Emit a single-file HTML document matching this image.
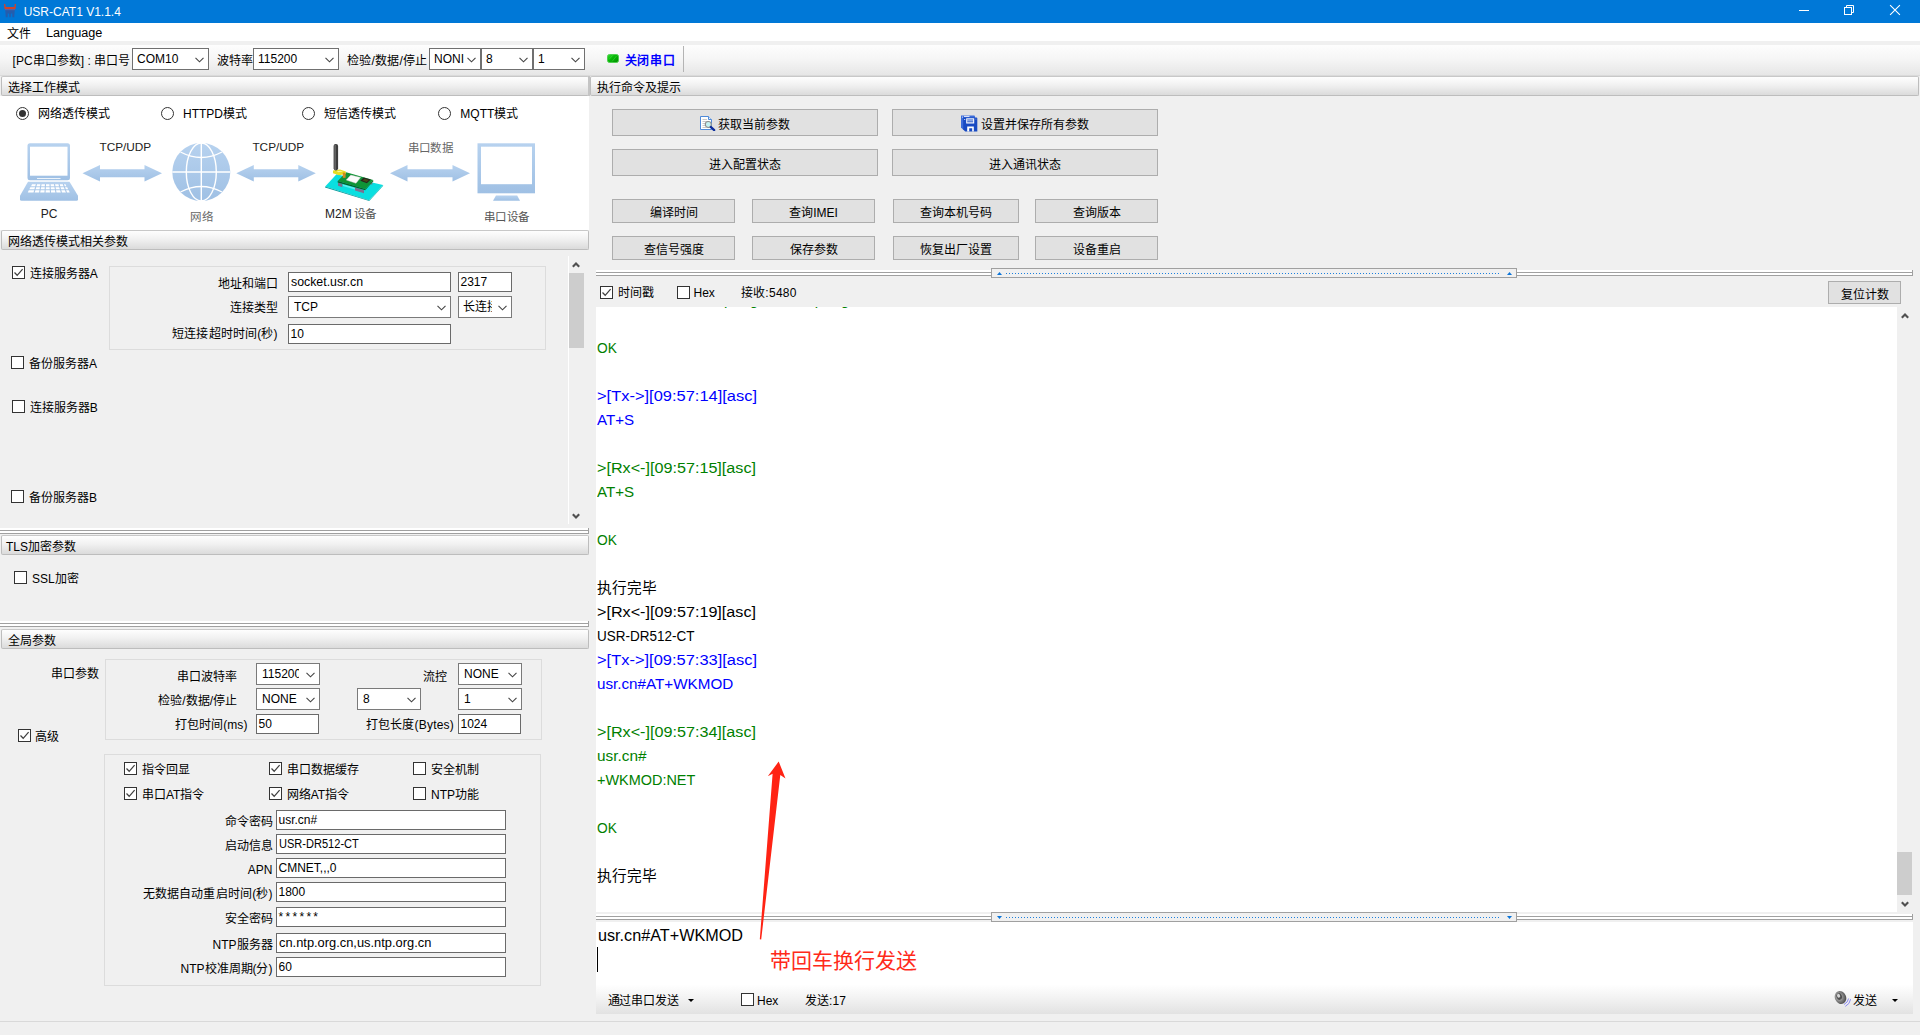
<!DOCTYPE html>
<html lang="zh-CN">
<head>
<meta charset="utf-8">
<title>USR-CAT1 V1.1.4</title>
<style>
html,body{margin:0;padding:0;}
body{width:1920px;height:1035px;overflow:hidden;position:relative;background:#f0f0f0;font-family:"Liberation Sans",sans-serif;font-size:12px;color:#000;}
body *{box-sizing:content-box;}
div,svg{position:absolute;}
.t{white-space:pre;}
.titlebar{left:0;top:0;width:1920px;height:23px;background:#0078d7;}
.menubar{left:0;top:23px;width:1920px;height:18px;background:#fff;}
.toolbar{left:0;top:45px;width:1920px;height:30px;background:linear-gradient(#fdfdfd 0%,#f6f6f6 45%,#e6e6e6 100%);border-bottom:1px solid #dadada;}
.hdr{border:1px solid #bdbdbd;border-top-color:#c8c8c8;border-radius:2px;background:linear-gradient(#fefefe 0%,#f1f1f1 45%,#dbdbdb 100%);padding-left:6px;white-space:pre;overflow:hidden;}
.white{background:#fff;}
.cb{width:11px;height:11px;border:1px solid #333;background:#fff;}
.cb svg{left:-1px;top:-1px;}
.rb{width:11px;height:11px;border:1px solid #333;border-radius:50%;background:#fff;}
.rb.on::after{content:"";position:absolute;left:2px;top:2px;width:7px;height:7px;border-radius:50%;background:#333;}
.inp{border:1px solid #6a6a6a;background:#fff;white-space:pre;overflow:hidden;}
.cmb{border:1px solid #7a7a7a;background:#fff;white-space:pre;overflow:hidden;}
.cmb.tb{border-color:#707070;}
.ct{overflow:hidden;white-space:pre;}
.chev{right:4px;top:50%;margin-top:-2.5px;}
.btn{border:1px solid #adadad;background:#e1e1e1;text-align:center;white-space:pre;overflow:hidden;}
.grp{border:1px solid #dcdcdc;}
.log{left:596px;top:307px;width:1301px;height:605px;background:#fff;overflow:hidden;}
.ll{left:0.8px;transform-origin:0 50%;height:24px;line-height:24px;font-size:15.5px;white-space:pre;}
.g{color:#008000;}
.b{color:#0000ff;}

</style>
</head>
<body>
<div class="titlebar"></div>
<svg style="left:0;top:0" width="20" height="23" viewBox="0 0 20 23">
<path d="M4 4.1 H5.3 L5.7 6.9 H14.3 L14.7 4.1 H16 L15.5 8.9 H4.5 Z" fill="#d2432a"/>
<path d="M5.2 9.6 H14.8 L14.2 17.2 H12.4 L12.2 13.4 H10.9 L10.7 17.2 H9.3 L9.1 13.4 H7.8 L7.6 17.2 H5.8 Z" fill="#2c58a6" opacity="0.85"/>
<rect x="5" y="8.9" width="10" height="1.3" fill="#6a5f9a" opacity="0.8"/>
</svg>
<div class="t" style="left:23.7px;top:4.2px;line-height:16px;height:16px;color:#fff;">USR-CAT1 V1.1.4</div>
<svg style="left:1799px;top:10px" width="10" height="1" viewBox="0 0 10 1"><rect width="10" height="1" fill="#fff"/></svg>
<svg style="left:1844px;top:5px" width="11" height="11" viewBox="0 0 11 11"><path d="M2.5 2.5 V0.5 H9.5 V7.5 H7.5" fill="none" stroke="#fff" stroke-width="1"/><rect x="0.5" y="2.5" width="7" height="7" fill="none" stroke="#fff" stroke-width="1"/></svg>
<svg style="left:1889px;top:4px" width="12" height="12" viewBox="0 0 12 12"><path d="M1.1 1.1 L10.9 10.9 M10.9 1.1 L1.1 10.9" fill="none" stroke="#fff" stroke-width="1.1"/></svg>
<div class="menubar"></div>
<div class="t" style="left:7px;top:25.7px;line-height:16px;height:16px;">文件</div>
<div class="t" style="left:45.6px;top:24.6px;line-height:16px;height:16px;transform:scaleX(1.0564);transform-origin:0 50%;">Language</div>
<div class="toolbar"></div>
<div class="t" style="left:12.5px;top:53.2px;line-height:16px;height:16px;letter-spacing:0.05px;">[PC串口参数] : 串口号</div>
<div class="cmb tb" style="left:132px;top:48px;width:75px;height:20px"><div class="ct" style="left:4px;top:0;width:54px;height:20px;line-height:21px">COM10</div><svg class="chev" width="9" height="6" viewBox="0 0 9 6"><path d="M0.5 0.8 L4.5 4.8 L8.5 0.8" fill="none" stroke="#444" stroke-width="1.1"/></svg></div>
<div class="t" style="left:217px;top:53.2px;line-height:16px;height:16px;">波特率</div>
<div class="cmb tb" style="left:253px;top:48px;width:84px;height:20px"><div class="ct" style="left:4px;top:0;width:63px;height:20px;line-height:21px">115200</div><svg class="chev" width="9" height="6" viewBox="0 0 9 6"><path d="M0.5 0.8 L4.5 4.8 L8.5 0.8" fill="none" stroke="#444" stroke-width="1.1"/></svg></div>
<div class="t" style="left:347px;top:53.2px;line-height:16px;height:16px;letter-spacing:0.23px;">检验/数据/停止</div>
<div class="cmb tb" style="left:429px;top:48px;width:50px;height:20px"><div class="ct" style="left:4px;top:0;width:30px;height:20px;line-height:21px">NONI</div><svg class="chev" width="9" height="6" viewBox="0 0 9 6"><path d="M0.5 0.8 L4.5 4.8 L8.5 0.8" fill="none" stroke="#444" stroke-width="1.1"/></svg></div>
<div class="cmb tb" style="left:481px;top:48px;width:50px;height:20px"><div class="ct" style="left:4px;top:0;width:29px;height:20px;line-height:21px">8</div><svg class="chev" width="9" height="6" viewBox="0 0 9 6"><path d="M0.5 0.8 L4.5 4.8 L8.5 0.8" fill="none" stroke="#444" stroke-width="1.1"/></svg></div>
<div class="cmb tb" style="left:533px;top:48px;width:50px;height:20px"><div class="ct" style="left:4px;top:0;width:29px;height:20px;line-height:21px">1</div><svg class="chev" width="9" height="6" viewBox="0 0 9 6"><path d="M0.5 0.8 L4.5 4.8 L8.5 0.8" fill="none" stroke="#444" stroke-width="1.1"/></svg></div>
<svg style="left:607px;top:54px" width="12" height="9" viewBox="0 0 12 9">
<defs><linearGradient id="led" x1="0" y1="0" x2="1" y2="1"><stop offset="0" stop-color="#35e035"/><stop offset="0.4" stop-color="#08ba08"/><stop offset="1" stop-color="#008c00"/></linearGradient></defs>
<rect x="0.5" y="0.5" width="11" height="8" rx="2" fill="url(#led)" stroke="#4fcf4f" stroke-width="1"/>
<path d="M2 5.5 L5.5 1.5 M5 7.5 L9.5 2" stroke="#5ff05f" stroke-width="0.6" opacity="0.6"/></svg>
<div class="t" style="left:624.5px;top:53.2px;line-height:16px;height:16px;color:#0000ff;font-weight:700;letter-spacing:0.75px;">关闭串口</div>
<div class="" style="left:683px;top:46px;width:1px;height:26px;background:#b4b4b4;"></div>
<div class="hdr" style="left:1px;top:76px;padding-left:6px;width:580px;height:18px;line-height:22px">选择工作模式</div>
<div class="white" style="left:0px;top:96px;width:589px;height:134px;"></div>
<div class="rb on" style="left:16px;top:107.2px"></div>
<div class="t" style="left:37.5px;top:106.4px;line-height:16px;height:16px;">网络透传模式</div>
<div class="rb" style="left:161px;top:107.2px"></div>
<div class="t" style="left:183px;top:106.4px;line-height:16px;height:16px;">HTTPD模式</div>
<div class="rb" style="left:301.8px;top:107.2px"></div>
<div class="t" style="left:323.7px;top:106.4px;line-height:16px;height:16px;">短信透传模式</div>
<div class="rb" style="left:438px;top:107.2px"></div>
<div class="t" style="left:460.3px;top:106.4px;line-height:16px;height:16px;">MQTT模式</div>
<svg style="left:0;top:135px" width="589" height="95" viewBox="0 135 589 95">
<defs><linearGradient id="bl" x1="0" y1="0" x2="0" y2="1"><stop offset="0" stop-color="#b7d2ef"/><stop offset="1" stop-color="#9fc0e4"/></linearGradient></defs>
<!-- laptop -->
<rect x="27.5" y="143.3" width="42.5" height="37" rx="2.5" fill="url(#bl)"/>
<rect x="30" y="146.7" width="37.5" height="29" fill="#fff"/>
<path d="M28 181.7 H69.5 L78 195.8 V199.3 Q78 200.8 76.5 200.8 H21.5 Q20 200.8 20 199.3 V195.8 Z" fill="url(#bl)"/>
<g fill="#fff">
<path d="M32 184.2 h33.5 l0.9 2 h-35.3z"/>
<path d="M30.3 187.2 h36.9 l0.9 2 h-38.7z"/>
<path d="M28.8 190.3 h39.9 l1 2.2 h-41.9z"/>
</g>
<g stroke="#a9c7e8" stroke-width="1.1">
<path d="M36.5 184 L34 193 M41 184 L39.6 193 M45.5 184 L45 193 M50 184 L50.5 193 M54.5 184 L56 193 M59 184 L61.5 193 M63.3 184 L66.6 193"/>
</g>
<rect x="37" y="178" width="23.5" height="1" fill="#fff" opacity=".8"/>
<!-- arrows -->
<path id="ar" d="M82.5 173.3 L100 165 V169.3 H144.5 V165 L162 173.3 L144.5 181.6 V177.3 H100 V181.6 Z" fill="url(#bl)"/>
<path d="M236.3 173.3 L253.8 165 V169.3 H298.3 V165 L315.8 173.3 L298.3 181.6 V177.3 H253.8 V181.6 Z" fill="url(#bl)"/>
<path d="M390 173.3 L407.5 165 V169.3 H452.5 V165 L470 173.3 L452.5 181.6 V177.3 H407.5 V181.6 Z" fill="url(#bl)"/>
<!-- globe -->
<circle cx="201.3" cy="172" r="29" fill="url(#bl)"/>
<g fill="none" stroke="#fff" stroke-width="1.4">
<path d="M201.3 143 V201 M172.3 172 H230.3"/>
<ellipse cx="201.3" cy="172" rx="15" ry="29"/>
<path d="M180.5 152 Q201.3 163 222 152 M180.5 192 Q201.3 181 222 192"/>
</g>
<!-- monitor -->
<rect x="477.5" y="143.3" width="57.5" height="50" fill="url(#bl)"/>
<rect x="481" y="146.7" width="51" height="37.5" fill="#fff"/>
<path d="M496 195.4 H517.2 L520 200.7 H493 Z" fill="url(#bl)"/>
<!-- M2M device -->
<path d="M325.2 186.6 L336.5 174.3 L383 185 L369 200.2 Z" fill="#0adfe0"/>
<path d="M325.2 186.6 L369 200.2 L369.3 201 L325 187.6 Z" fill="#089c9e"/>
<path d="M369 200.2 L383 185 L383.2 185.8 L369.3 201 Z" fill="#0bbfc0"/>
<path d="M338 182.5 L342.3 184 V187.3 L338 185.8 Z M355 187.5 L364 190.3 V193.3 L355 190.5 Z M370.5 181.5 L372.3 182 V184.6 L370.5 184.3 Z" fill="#7c7090"/>
<path d="M343 184.3 L355 187.8 V189.6 L343 186 Z" fill="#5af0f0"/>
<path d="M337.7 181 L346.2 172.2 L373.2 180 L365.3 189 Z" fill="#0f9436"/>
<path d="M337.7 181 L365.3 189 V190.3 L337.7 182.4 Z" fill="#0a5e22"/>
<path d="M365.3 189 L373.2 180 V181.2 L365.3 190.3 Z" fill="#0c7a2c"/>
<path d="M346.2 180 L350.8 175.1 L360.6 177.4 L356 183.3 Z" fill="#fbfbfb" stroke="#d8c8d0" stroke-width="0.4"/>
<path d="M360.3 180.7 L363.6 177.4 L370.8 179.4 L366.9 183.3 Z" fill="#26261e"/>
<path d="M362.5 180.6 L364.6 178.8 L368.8 180 L366.6 182 Z" fill="#4a4418"/>
<path d="M333 170.6 L340 169.6 L345.8 171.6 L345.8 174 L339 175.2 L333 173.2 Z" fill="#e6de22"/>
<path d="M336.5 171.2 L341 170.7 L343 171.5 L338.5 172.3 Z" fill="#f6f3a0"/>
<rect x="342.8" y="172.6" width="2.8" height="5.2" fill="#d28a22"/>
<rect x="333.6" y="144" width="4.5" height="26.4" rx="2.1" fill="#3c3c3c"/>
<rect x="334.5" y="145" width="1.2" height="25" fill="#747474"/>
</svg>
<div class="t" style="left:-24.7px;width:300px;text-align:center;top:139.3px;line-height:16px;height:16px;font-size:11.8px;color:#222;">TCP/UDP</div>
<div class="t" style="left:128.3px;width:300px;text-align:center;top:139.3px;line-height:16px;height:16px;font-size:11.8px;color:#222;">TCP/UDP</div>
<div class="t" style="left:-101px;width:300px;text-align:center;top:206.1px;line-height:16px;height:16px;color:#222;">PC</div>
<div class="t" style="left:280.5px;width:300px;text-align:center;top:139.5px;line-height:16px;height:16px;font-size:11.5px;color:#666;font-family:'Liberation Serif',serif;letter-spacing:0.45px;">串口数据</div>
<div class="t" style="left:51.9px;width:300px;text-align:center;top:208.5px;line-height:16px;height:16px;font-size:11.5px;color:#666;font-family:'Liberation Serif',serif;letter-spacing:0.4px;">网络</div>
<div class="t" style="left:325px;top:206.1px;line-height:16px;height:16px;color:#222;">M2M</div>
<div class="t" style="left:353.5px;top:205.7px;line-height:16px;height:16px;font-size:11.5px;color:#555;font-family:'Liberation Serif',serif;letter-spacing:0.4px;">设备</div>
<div class="t" style="left:356.9px;width:300px;text-align:center;top:208.7px;line-height:16px;height:16px;font-size:11.5px;color:#555;font-family:'Liberation Serif',serif;letter-spacing:0.45px;">串口设备</div>
<div class="hdr" style="left:1px;top:230px;padding-left:6px;width:580px;height:18px;line-height:22px">网络透传模式相关参数</div>
<div class="" style="left:568px;top:256px;width:1px;height:268px;background:#fff;"></div>
<div class="" style="left:569px;top:273px;width:15px;height:75px;background:#cdcdcd;"></div>
<svg style="left:572.4px;top:261px" width="8" height="7" viewBox="0 0 8 7"><path d="M0.8 5.7 L4 2.5 L7.2 5.7" fill="none" stroke="#505050" stroke-width="2.1"/></svg>
<svg style="left:572.4px;top:512.5px" width="8" height="7" viewBox="0 0 8 7"><path d="M0.8 1.3 L4 4.5 L7.2 1.3" fill="none" stroke="#505050" stroke-width="2.1"/></svg>
<div class="cb" style="left:12px;top:266px"><svg width="13" height="13" viewBox="0 0 13 13"><path d="M2.5 6.5 L5.2 9.3 L10.6 3.2" fill="none" stroke="#404040" stroke-width="1.25"/></svg></div>
<div class="t" style="left:29.7px;top:265.7px;line-height:16px;height:16px;">连接服务器A</div>
<div class="grp" style="left:109px;top:266px;width:435px;height:82px;"></div>
<div class="t" style="right:1642.5px;top:276px;line-height:16px;height:16px;">地址和端口</div>
<div class="t" style="right:1642.5px;top:299.7px;line-height:16px;height:16px;">连接类型</div>
<div class="t" style="right:1642.5px;top:326px;line-height:16px;height:16px;letter-spacing:0.15px;margin-right:-0.15px;">短连接超时时间(秒)</div>
<div class="inp" style="left:288px;top:272px;width:159.5px;height:18px;line-height:19px;padding-left:1.5px;"><span style="display:inline-block;transform:scaleX(1.0281);transform-origin:0 50%">socket.usr.cn</span></div>
<div class="inp" style="left:458px;top:272px;width:50.5px;height:18px;line-height:19px;padding-left:1.5px;">2317</div>
<div class="cmb" style="left:288px;top:296px;width:161px;height:20px"><div class="ct" style="left:5px;top:0;width:139px;height:20px;line-height:21px">TCP</div><svg class="chev" width="9" height="6" viewBox="0 0 9 6"><path d="M0.5 0.8 L4.5 4.8 L8.5 0.8" fill="none" stroke="#444" stroke-width="1.1"/></svg></div>
<div class="cmb" style="left:458px;top:296px;width:52px;height:20px"><div class="ct" style="left:4px;top:0;width:29px;height:20px;line-height:21px">长连接</div><svg class="chev" width="9" height="6" viewBox="0 0 9 6"><path d="M0.5 0.8 L4.5 4.8 L8.5 0.8" fill="none" stroke="#444" stroke-width="1.1"/></svg></div>
<div class="inp" style="left:288px;top:324px;width:159.5px;height:18px;line-height:19px;padding-left:1.5px;">10</div>
<div class="cb" style="left:11px;top:356px"></div>
<div class="t" style="left:29px;top:355.7px;line-height:16px;height:16px;">备份服务器A</div>
<div class="cb" style="left:12px;top:400px"></div>
<div class="t" style="left:29.7px;top:399.7px;line-height:16px;height:16px;">连接服务器B</div>
<div class="cb" style="left:11px;top:490px"></div>
<div class="t" style="left:29px;top:489.7px;line-height:16px;height:16px;">备份服务器B</div>
<div class="" style="left:0px;top:528px;width:589px;height:2px;background:#fff;"></div>
<div class="" style="left:0px;top:530px;width:589px;height:1px;background:#a0a0a0;"></div>
<div class="" style="left:0px;top:531px;width:589px;height:2px;background:#fff;"></div>
<div class="" style="left:0px;top:533px;width:589px;height:1px;background:#a0a0a0;"></div>
<div class="" style="left:588px;top:528px;width:1px;height:6px;background:#a0a0a0;"></div>
<div class="hdr" style="left:1px;top:535px;padding-left:4px;width:582px;height:18px;line-height:22px">TLS加密参数</div>
<div class="cb" style="left:14px;top:571px"></div>
<div class="t" style="left:32px;top:570.7px;line-height:16px;height:16px;">SSL加密</div>
<div class="" style="left:0px;top:621px;width:589px;height:2px;background:#fff;"></div>
<div class="" style="left:0px;top:623px;width:589px;height:1px;background:#a0a0a0;"></div>
<div class="" style="left:0px;top:624px;width:589px;height:2px;background:#fff;"></div>
<div class="" style="left:0px;top:626px;width:589px;height:1px;background:#a0a0a0;"></div>
<div class="" style="left:588px;top:621px;width:1px;height:6px;background:#a0a0a0;"></div>
<div class="hdr" style="left:1px;top:629px;padding-left:6px;width:580px;height:18px;line-height:22px">全局参数</div>
<div class="t" style="left:50.5px;top:666px;line-height:16px;height:16px;">串口参数</div>
<div class="grp" style="left:105px;top:659px;width:435px;height:79px;"></div>
<div class="t" style="right:1683px;top:668.5px;line-height:16px;height:16px;">串口波特率</div>
<div class="cmb" style="left:256px;top:663px;width:62px;height:20px"><div class="ct" style="left:5px;top:0;width:36.5px;height:20px;line-height:21px">115200</div><svg class="chev" width="9" height="6" viewBox="0 0 9 6"><path d="M0.5 0.8 L4.5 4.8 L8.5 0.8" fill="none" stroke="#444" stroke-width="1.1"/></svg></div>
<div class="t" style="left:422.5px;top:668.7px;line-height:16px;height:16px;">流控</div>
<div class="cmb" style="left:458px;top:663px;width:62px;height:20px"><div class="ct" style="left:5px;top:0;width:40px;height:20px;line-height:21px">NONE</div><svg class="chev" width="9" height="6" viewBox="0 0 9 6"><path d="M0.5 0.8 L4.5 4.8 L8.5 0.8" fill="none" stroke="#444" stroke-width="1.1"/></svg></div>
<div class="t" style="right:1683px;top:693px;line-height:16px;height:16px;">检验/数据/停止</div>
<div class="cmb" style="left:256px;top:688px;width:62px;height:20px"><div class="ct" style="left:5px;top:0;width:40px;height:20px;line-height:21px">NONE</div><svg class="chev" width="9" height="6" viewBox="0 0 9 6"><path d="M0.5 0.8 L4.5 4.8 L8.5 0.8" fill="none" stroke="#444" stroke-width="1.1"/></svg></div>
<div class="cmb" style="left:357px;top:688px;width:62px;height:20px"><div class="ct" style="left:5px;top:0;width:40px;height:20px;line-height:21px">8</div><svg class="chev" width="9" height="6" viewBox="0 0 9 6"><path d="M0.5 0.8 L4.5 4.8 L8.5 0.8" fill="none" stroke="#444" stroke-width="1.1"/></svg></div>
<div class="cmb" style="left:458px;top:688px;width:62px;height:20px"><div class="ct" style="left:5px;top:0;width:40px;height:20px;line-height:21px">1</div><svg class="chev" width="9" height="6" viewBox="0 0 9 6"><path d="M0.5 0.8 L4.5 4.8 L8.5 0.8" fill="none" stroke="#444" stroke-width="1.1"/></svg></div>
<div class="t" style="left:175px;top:717.2px;line-height:16px;height:16px;letter-spacing:0.06px;">打包时间(ms)</div>
<div class="inp" style="left:256px;top:714px;width:59.5px;height:18px;line-height:19px;padding-left:1.5px;">50</div>
<div class="t" style="left:365.8px;top:717.2px;line-height:16px;height:16px;letter-spacing:0.20px;">打包长度(Bytes)</div>
<div class="inp" style="left:458px;top:714px;width:59.5px;height:18px;line-height:19px;padding-left:1.5px;">1024</div>
<div class="cb" style="left:18px;top:729px"><svg width="13" height="13" viewBox="0 0 13 13"><path d="M2.5 6.5 L5.2 9.3 L10.6 3.2" fill="none" stroke="#404040" stroke-width="1.25"/></svg></div>
<div class="t" style="left:35.3px;top:728.7px;line-height:16px;height:16px;">高级</div>
<div class="grp" style="left:104px;top:754px;width:435px;height:230px;"></div>
<div class="cb" style="left:124px;top:762px"><svg width="13" height="13" viewBox="0 0 13 13"><path d="M2.5 6.5 L5.2 9.3 L10.6 3.2" fill="none" stroke="#404040" stroke-width="1.25"/></svg></div>
<div class="t" style="left:142px;top:761.7px;line-height:16px;height:16px;">指令回显</div>
<div class="cb" style="left:269px;top:762px"><svg width="13" height="13" viewBox="0 0 13 13"><path d="M2.5 6.5 L5.2 9.3 L10.6 3.2" fill="none" stroke="#404040" stroke-width="1.25"/></svg></div>
<div class="t" style="left:286.7px;top:761.7px;line-height:16px;height:16px;">串口数据缓存</div>
<div class="cb" style="left:413px;top:762px"></div>
<div class="t" style="left:431px;top:761.7px;line-height:16px;height:16px;">安全机制</div>
<div class="cb" style="left:124px;top:787px"><svg width="13" height="13" viewBox="0 0 13 13"><path d="M2.5 6.5 L5.2 9.3 L10.6 3.2" fill="none" stroke="#404040" stroke-width="1.25"/></svg></div>
<div class="t" style="left:142px;top:786.7px;line-height:16px;height:16px;">串口AT指令</div>
<div class="cb" style="left:269px;top:787px"><svg width="13" height="13" viewBox="0 0 13 13"><path d="M2.5 6.5 L5.2 9.3 L10.6 3.2" fill="none" stroke="#404040" stroke-width="1.25"/></svg></div>
<div class="t" style="left:286.7px;top:786.7px;line-height:16px;height:16px;">网络AT指令</div>
<div class="cb" style="left:413px;top:787px"></div>
<div class="t" style="left:431px;top:786.7px;line-height:16px;height:16px;">NTP功能</div>
<div class="t" style="right:1647.5px;top:814.2px;line-height:16px;height:16px;">命令密码</div>
<div class="inp" style="left:276px;top:810px;width:226.5px;height:18px;line-height:19px;padding-left:1.5px;">usr.cn#</div>
<div class="t" style="right:1647.5px;top:838.2px;line-height:16px;height:16px;">启动信息</div>
<div class="inp" style="left:276px;top:834px;width:226.5px;height:18px;line-height:19px;padding-left:1.5px;"><span style="display:inline-block;transform:scaleX(0.9205);transform-origin:0 50%">USR-DR512-CT</span></div>
<div class="t" style="right:1647.5px;top:862.2px;line-height:16px;height:16px;">APN</div>
<div class="inp" style="left:276px;top:858px;width:226.5px;height:18px;line-height:19px;padding-left:1.5px;">CMNET,,,0</div>
<div class="t" style="right:1647.5px;top:886.2px;line-height:16px;height:16px;letter-spacing:0.17px;margin-right:-0.17px;">无数据自动重启时间(秒)</div>
<div class="inp" style="left:276px;top:882px;width:226.5px;height:18px;line-height:19px;padding-left:1.5px;">1800</div>
<div class="t" style="right:1647.5px;top:911.2px;line-height:16px;height:16px;">安全密码</div>
<div class="inp" style="left:276px;top:907px;width:226.5px;height:18px;line-height:19px;padding-left:1.5px;"><span style='letter-spacing:2.3px'>******</span></div>
<div class="t" style="right:1647.5px;top:937.2px;line-height:16px;height:16px;">NTP服务器</div>
<div class="inp" style="left:276px;top:933px;width:226.5px;height:18px;line-height:19px;padding-left:1.5px;"><span style="display:inline-block;transform:scaleX(1.0718);transform-origin:0 50%">cn.ntp.org.cn,us.ntp.org.cn</span></div>
<div class="t" style="right:1647.5px;top:961.2px;line-height:16px;height:16px;">NTP校准周期(分)</div>
<div class="inp" style="left:276px;top:957px;width:226.5px;height:18px;line-height:19px;padding-left:1.5px;">60</div>
<div class="" style="left:0px;top:1021px;width:1920px;height:1px;background:#d9d9d9;"></div>
<div class="" style="left:588px;top:76px;width:2px;height:20px;background:#c4c4c4;"></div>
<div class="hdr" style="left:590px;top:76px;padding-left:6px;width:1321px;height:18px;line-height:22px">执行命令及提示</div>
<div class="btn" style="left:612px;top:109px;width:264px;height:25px;line-height:31px"><svg style="position:relative;vertical-align:middle;margin-right:2.7px;top:-2.5px" width="16" height="16" viewBox="0 0 16 16">
<path d="M0.5 1.5 H8.5 L11.5 4.5 V14.5 H0.5 Z" fill="#fff" stroke="#4f8ad8" stroke-width="1"/>
<path d="M8.5 1.5 V4.5 H11.5" fill="#e4eefb" stroke="#4f8ad8" stroke-width="1"/>
<path d="M2.5 4.5 H7 M2.5 6.5 H9 M2.5 8.5 H5.5 M2.5 10.5 H5 M2.5 12.5 H6.5" stroke="#c9c9c9" stroke-width="1"/>
<circle cx="8.3" cy="9.5" r="3" fill="#c4f2f2" stroke="#8c8c8c" stroke-width="1.1"/>
<path d="M10.9 12.1 L14.2 15.1" stroke="#0c2c9c" stroke-width="2.3" stroke-linecap="round"/>
</svg>获取当前参数</div>
<div class="btn" style="left:892px;top:109px;width:264px;height:25px;line-height:31px"><svg style="position:relative;vertical-align:middle;margin-right:3.5px;top:-2.5px" width="17" height="17" viewBox="0 0 17 17">
<path d="M0 0.5 H13 Q14 0.5 14 1.5 V14.5 H2 L0 12.5 Z" fill="#3c6cda"/>
<path d="M3 1.4 H8.5" stroke="#fff" stroke-width="0.9"/>
<rect x="1" y="1.6" width="1" height="1" fill="#dfe8fb"/>
<path d="M2.2 2.5 H15.3 Q16.3 2.5 16.3 3.5 V16.5 H4.2 L2.2 14.5 Z" fill="#184ac2"/>
<rect x="3.2" y="4" width="1" height="1" fill="#dfe8fb"/><rect x="14.4" y="3.6" width="1" height="1" fill="#6e8fe0"/>
<rect x="5.2" y="3.3" width="8" height="5.2" fill="#fff"/>
<path d="M6.2 5 H12.2 M6.2 6.8 H12.2" stroke="#184ac2" stroke-width="1"/>
<path d="M6.2 11.6 H12.8 V16.5 H11.2 V13.2 H8.2 V16.5 H6.2 Z" fill="#fff"/>
</svg>设置并保存所有参数</div>
<div class="btn" style="left:612px;top:149px;width:264px;height:25px;line-height:31px">进入配置状态</div>
<div class="btn" style="left:892px;top:149px;width:264px;height:25px;line-height:31px">进入通讯状态</div>
<div class="btn" style="left:612px;top:199px;width:121px;height:22px;line-height:26px">编译时间</div>
<div class="btn" style="left:752px;top:199px;width:121px;height:22px;line-height:26px">查询IMEI</div>
<div class="btn" style="left:893px;top:199px;width:124px;height:22px;line-height:26px">查询本机号码</div>
<div class="btn" style="left:1035px;top:199px;width:121px;height:22px;line-height:26px">查询版本</div>
<div class="btn" style="left:612px;top:236px;width:121px;height:22px;line-height:26px">查信号强度</div>
<div class="btn" style="left:752px;top:236px;width:121px;height:22px;line-height:26px">保存参数</div>
<div class="btn" style="left:893px;top:236px;width:124px;height:22px;line-height:26px">恢复出厂设置</div>
<div class="btn" style="left:1035px;top:236px;width:121px;height:22px;line-height:26px">设备重启</div>
<div class="" style="left:596px;top:270px;width:1317px;height:2px;background:#fff;"></div>
<div class="" style="left:596px;top:272px;width:1317px;height:1px;background:#a0a0a0;"></div>
<div class="" style="left:596px;top:273px;width:1317px;height:2px;background:#fff;"></div>
<div class="" style="left:596px;top:275px;width:1317px;height:1px;background:#a0a0a0;"></div>
<div class="" style="left:1912px;top:270px;width:1px;height:6px;background:#a0a0a0;"></div>
<div class="" style="left:991px;top:268px;width:524px;height:8px;background:#f0f0f0;border:1px solid #a0a0a0;"></div>
<svg style="left:997px;top:272px" width="5" height="3" viewBox="0 0 5 3"><path d="M0 3 L2.5 0 L5 3 Z" fill="#0a74d8"/></svg>
<svg style="left:1507px;top:272px" width="5" height="3" viewBox="0 0 5 3"><path d="M0 3 L2.5 0 L5 3 Z" fill="#0a74d8"/></svg>
<div class="" style="left:1006px;top:273px;width:494px;height:1px;background:repeating-linear-gradient(90deg,#1b7fdc 0,#1b7fdc 1px,transparent 1px,transparent 3px);"></div>
<div class="cb" style="left:600px;top:286px"><svg width="13" height="13" viewBox="0 0 13 13"><path d="M2.5 6.5 L5.2 9.3 L10.6 3.2" fill="none" stroke="#404040" stroke-width="1.25"/></svg></div>
<div class="t" style="left:617.5px;top:285px;line-height:16px;height:16px;">时间戳</div>
<div class="cb" style="left:677px;top:286px"></div>
<div class="t" style="left:693.5px;top:285px;line-height:16px;height:16px;">Hex</div>
<div class="t" style="left:740.8px;top:285px;line-height:16px;height:16px;letter-spacing:0.27px;">接收:5480</div>
<div class="btn" style="left:1828px;top:281px;width:71px;height:21px;line-height:26.4px">复位计数</div>
<div class="log">
<div class="ll g" style="top:-18.55px;font-size:15px;">+NTPSVR:60 cn.ntp.org.cn,us.ntp.org.cn</div>
<div class="ll g" style="top:29.45px;transform:scaleX(0.8881);">OK</div>
<div class="ll b" style="top:77.45px;transform:scaleX(1.0611);">&gt;[Tx-&gt;][09:57:14][asc]</div>
<div class="ll b" style="top:101.45px;transform:scaleX(0.9751);">AT+S</div>
<div class="ll g" style="top:149.45px;transform:scaleX(1.0425);">&gt;[Rx&lt;-][09:57:15][asc]</div>
<div class="ll g" style="top:173.45px;transform:scaleX(0.9751);">AT+S</div>
<div class="ll g" style="top:221.45px;transform:scaleX(0.8881);">OK</div>
<div class="ll " style="top:269.45px;font-size:14.67px;">执行完毕</div>
<div class="ll " style="top:293.45px;transform:scaleX(1.0425);">&gt;[Rx&lt;-][09:57:19][asc]</div>
<div class="ll " style="top:317.45px;transform:scaleX(0.8708);">USR-DR512-CT</div>
<div class="ll b" style="top:341.45px;transform:scaleX(1.0611);">&gt;[Tx-&gt;][09:57:33][asc]</div>
<div class="ll b" style="top:365.45px;transform:scaleX(0.9812);">usr.cn#AT+WKMOD</div>
<div class="ll g" style="top:413.45px;transform:scaleX(1.0425);">&gt;[Rx&lt;-][09:57:34][asc]</div>
<div class="ll g" style="top:437.45px;transform:scaleX(0.9903);">usr.cn#</div>
<div class="ll g" style="top:461.45px;transform:scaleX(0.9318);">+WKMOD:NET</div>
<div class="ll g" style="top:509.45px;transform:scaleX(0.8881);">OK</div>
<div class="ll " style="top:557.45px;font-size:14.67px;">执行完毕</div>
</div>
<div class="" style="left:1897px;top:307px;width:17px;height:605px;background:#f0f0f0;"></div>
<div class="" style="left:1897px;top:852px;width:15px;height:43px;background:#cdcdcd;"></div>
<svg style="left:1900.5px;top:312px" width="8" height="7" viewBox="0 0 8 7"><path d="M0.8 5.7 L4 2.5 L7.2 5.7" fill="none" stroke="#505050" stroke-width="2.1"/></svg>
<svg style="left:1900.5px;top:900.5px" width="8" height="7" viewBox="0 0 8 7"><path d="M0.8 1.3 L4 4.5 L7.2 1.3" fill="none" stroke="#505050" stroke-width="2.1"/></svg>
<div class="" style="left:596px;top:912px;width:1317px;height:10px;background:#f0f0f0;"></div>
<div class="" style="left:596px;top:914px;width:1317px;height:2px;background:#fff;"></div>
<div class="" style="left:596px;top:916px;width:1317px;height:1px;background:#a0a0a0;"></div>
<div class="" style="left:596px;top:917px;width:1317px;height:2px;background:#fff;"></div>
<div class="" style="left:596px;top:919px;width:1317px;height:1px;background:#a0a0a0;"></div>
<div class="" style="left:1912px;top:914px;width:1px;height:6px;background:#a0a0a0;"></div>
<div class="" style="left:991px;top:912px;width:524px;height:8px;background:#f0f0f0;border:1px solid #a0a0a0;"></div>
<svg style="left:997px;top:916px" width="5" height="3" viewBox="0 0 5 3"><path d="M0 0 L5 0 L2.5 3 Z" fill="#0a74d8"/></svg>
<svg style="left:1507px;top:916px" width="5" height="3" viewBox="0 0 5 3"><path d="M0 0 L5 0 L2.5 3 Z" fill="#0a74d8"/></svg>
<div class="" style="left:1006px;top:917px;width:494px;height:1px;background:repeating-linear-gradient(90deg,#1b7fdc 0,#1b7fdc 1px,transparent 1px,transparent 3px);"></div>
<div class="" style="left:596px;top:922px;width:1317px;height:92px;background:linear-gradient(#fff 0,#fff 68%,#f3f3f3 82%,#e2e2e2 100%);"></div>
<div class="t" style="left:597.5px;top:923.7px;line-height:24px;height:24px;font-size:16px;transform:scaleX(1.0119);transform-origin:0 50%;">usr.cn#AT+WKMOD</div>
<div class="" style="left:597px;top:947px;width:1px;height:25px;background:#000;"></div>
<div class="t" style="left:769.8px;top:947px;line-height:28px;height:28px;font-size:21px;color:#ff2a1a;font-weight:300;letter-spacing:0.03px;">带回车换行发送</div>
<svg style="left:750px;top:755px" width="45" height="190" viewBox="750 755 45 190">
<path d="M778.7 761.5 L785.5 778.5 L780.3 775 L761.2 939.5 L759.8 939.3 L772.6 773.8 L767.8 776.2 Z" fill="#ff2314"/></svg>
<div class="t" style="left:607.5px;top:992.7px;line-height:16px;height:16px;letter-spacing:-0.08px;">通过串口发送</div>
<svg style="left:687.5px;top:999px" width="6" height="3" viewBox="0 0 6 3"><path d="M0 0 H6 L3 3 Z" fill="#000"/></svg>
<div class="cb" style="left:741px;top:993px"></div>
<div class="t" style="left:757px;top:992.7px;line-height:16px;height:16px;">Hex</div>
<div class="t" style="left:804.7px;top:992.7px;line-height:16px;height:16px;letter-spacing:0.12px;">发送:17</div>
<svg style="left:1832.7px;top:990.4px" width="19" height="18" viewBox="0 0 19 18">
<defs><radialGradient id="spk" cx="0.4" cy="0.4" r="0.7"><stop offset="0" stop-color="#dcdcdc"/><stop offset="0.5" stop-color="#868686"/><stop offset="1" stop-color="#3a3a3a"/></radialGradient></defs>
<ellipse cx="7.5" cy="7.5" rx="5.6" ry="6.6" transform="rotate(-25 7.5 7.5)" fill="url(#spk)"/>
<ellipse cx="6.2" cy="6.5" rx="2.7" ry="3.4" transform="rotate(-25 6.2 6.5)" fill="#505050"/>
<ellipse cx="5.6" cy="5.8" rx="1.5" ry="2" transform="rotate(-25 5.6 5.8)" fill="#d6d6d6"/>
<path d="M11 14.5 Q14.8 12.6 15.6 8.5 M12.3 16.4 Q16.9 14 17.6 9.2" fill="none" stroke="#8a8af0" stroke-width="1"/>
</svg>
<div class="t" style="left:1853px;top:992.7px;line-height:16px;height:16px;">发送</div>
<svg style="left:1891.6px;top:999px" width="6" height="3" viewBox="0 0 6 3"><path d="M0 0 H6 L3 3 Z" fill="#000"/></svg>
</body>
</html>
